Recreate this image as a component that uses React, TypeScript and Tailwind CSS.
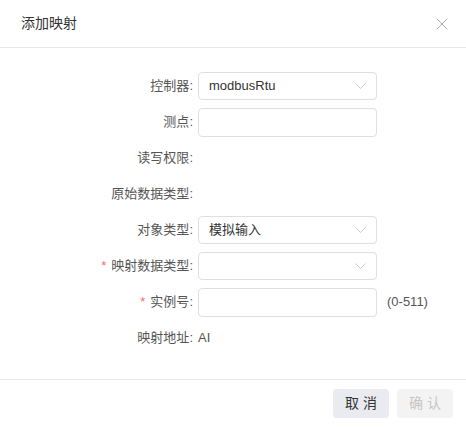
import { X } from "lucide-react";

const font = { fontFamily: '"Liberation Sans", "Noto Sans CJK SC", sans-serif' };

const Chevron = () => (
  <svg width="11" height="6" viewBox="0 0 11 6" fill="none" className="shrink-0">
    <path d="M0.5 0.5 L5.5 5.5 L10.5 0.5" stroke="#c8cbd2" strokeWidth="1" />
  </svg>
);

type RowProps = {
  label: string;
  required?: boolean;
  children?: React.ReactNode;
};

const Row = ({ label, required, children }: RowProps) => (
  <div className="flex items-center h-[28px]">
    <div className="w-[194px] pr-[1px] text-right text-[13px] text-[#555] whitespace-nowrap">
      {required && <span className="text-[#f56c6c] mr-[5px]">*</span>}
      {label}:
    </div>
    <div className="flex items-center ml-[4px]">{children}</div>
  </div>
);

const Select = ({ value }: { value?: string }) => (
  <div className="w-[179px] h-[28px] border border-[#dcdfe6] rounded-[4px] flex items-center justify-between pl-[10px] pr-[10px] text-[13px] text-[#333]">
    <span>{value}</span>
    <Chevron />
  </div>
);

const Input = () => (
  <div className="w-[179px] h-[29px] border border-[#dcdfe6] rounded-[4px]" />
);

export default function App() {
  return (
    <div className="w-[466px] h-[427px] bg-white flex flex-col" style={font}>
      <div className="h-[48px] border-b border-[#e8e8e8] flex items-center justify-between pl-[21px] pr-[14px]">
        <span className="text-[14px] text-[#333]">添加映射</span>
        <X size={20} strokeWidth={1} className="text-[#999]" />
      </div>

      <div className="flex flex-col gap-2 pt-[24px] pb-[27px]">
        <Row label="控制器">
          <Select value="modbusRtu" />
        </Row>
        <Row label="测点">
          <Input />
        </Row>
        <Row label="读写权限" />
        <Row label="原始数据类型" />
        <Row label="对象类型">
          <Select value="模拟输入" />
        </Row>
        <Row label="映射数据类型" required>
          <Select />
        </Row>
        <Row label="实例号" required>
          <Input />
          <span className="ml-[10px] text-[13px] text-[#555]">(0-511)</span>
        </Row>
        <Row label="映射地址">
          <span className="text-[13px] text-[#555]">AI</span>
        </Row>
      </div>

      <div className="border-t border-[#e8e8e8] flex justify-end gap-2 pt-[9px] pr-[13px]">
        <button className="w-[56px] h-[29px] rounded-[4px] bg-[#e9ebf0] text-[14px] text-[#333]">
          取 消
        </button>
        <button className="w-[56px] h-[29px] rounded-[4px] bg-[#f3f3f3] text-[14px] text-[#c6c6c6]">
          确 认
        </button>
      </div>
    </div>
  );
}
